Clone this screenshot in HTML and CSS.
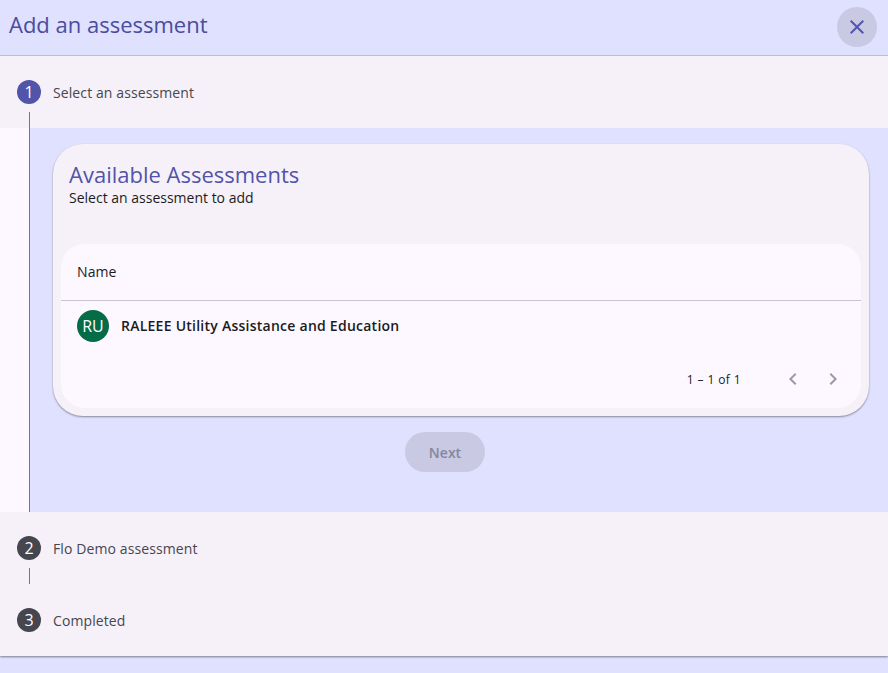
FILE: index.html
```html
<!DOCTYPE html>
<html lang="en">
<head>
  <meta charset="UTF-8" />
  <title>Add an assessment</title>
  <link rel="stylesheet" href="styles.css">
</head>
<body>
  <header class="top-bar">
    <h1>Add an assessment</h1>
    <button class="close-btn" aria-label="Close">
      <svg width="24" height="24" viewBox="0 0 24 24"><path d="M19 6.41 17.59 5 12 10.59 6.41 5 5 6.41 10.59 12 5 17.59 6.41 19 12 13.41 17.59 19 19 17.59 13.41 12z"/></svg>
    </button>
  </header>

  <main class="stepper">
    <!-- Step 1 -->
    <div class="step-head">
      <span class="step-num active">1</span>
      <span class="step-label">Select an assessment</span>
    </div>
    <div class="step-body">
      <div class="step-rail"><span class="rail-line"></span></div>
      <div class="step-content">
        <section class="card">
          <div class="card-head">
            <h2>Available Assessments</h2>
            <p>Select an assessment to add</p>
          </div>
          <div class="table">
            <div class="table-head">Name</div>
            <div class="table-row">
              <span class="avatar">RU</span>
              <span class="row-name">RALEEE Utility Assistance and Education</span>
            </div>
            <div class="paginator">
              <span class="range">1 – 1 of 1</span>
              <button class="page-btn" aria-label="Previous">
                <svg width="24" height="24" viewBox="0 0 24 24"><path d="M15.41 7.41 14 6l-6 6 6 6 1.41-1.41L10.83 12z"/></svg>
              </button>
              <button class="page-btn" aria-label="Next page">
                <svg width="24" height="24" viewBox="0 0 24 24"><path d="M10 6 8.59 7.41 13.17 12l-4.58 4.59L10 18l6-6z"/></svg>
              </button>
            </div>
          </div>
        </section>
        <div class="actions">
          <button class="next-btn" disabled>Next</button>
        </div>
      </div>
    </div>

    <!-- Step 2 -->
    <div class="step-head">
      <span class="step-num">2</span>
      <span class="step-label">Flo Demo assessment</span>
    </div>
    <div class="step-gap"><span class="rail-line"></span></div>

    <!-- Step 3 -->
    <div class="step-head">
      <span class="step-num">3</span>
      <span class="step-label">Completed</span>
    </div>
  </main>
</body>
</html>
```

FILE: styles.css
```css
* { box-sizing: border-box; }
html, body { height: 100%; }
body {
  margin: 0;
  overflow: hidden;
  font-family: "Open Sans", "Noto Sans", sans-serif;
  background: #e0e0ff;
  color: #1b1b1f;
}

button {
  font-family: inherit;
  border: none;
  padding: 0;
}

/* Top bar */
.top-bar {
  height: 56px;
  display: flex;
  align-items: center;
  justify-content: space-between;
  padding: 0 11px 8px 9px;
  border-bottom: 1px solid #c7c5d0;
}

.top-bar h1 {
  margin: 0;
  font-size: 22px;
  font-weight: 400;
  color: #4a4c9c;
}

.close-btn {
  width: 40px;
  height: 40px;
  margin-top: 6px;
  border-radius: 50%;
  background: #c9c9e4;
  display: flex;
  align-items: center;
  justify-content: center;
}

.close-btn svg { fill: #5356ad; }

/* Stepper */
.stepper {
  height: 600px;
  background: #f6f1f8;
  box-shadow: 0 1px 2px rgba(0,0,0,0.45);
}

.step-head {
  height: 72px;
  display: flex;
  align-items: center;
  gap: 12px;
  padding-left: 17px;
}

.step-num {
  width: 24px;
  height: 24px;
  border-radius: 50%;
  background: #46464f;
  color: #fff;
  font-size: 16px;
  display: flex;
  align-items: center;
  justify-content: center;
}

.step-num.active { background: #5154a8; }

.step-label {
  font-size: 14px;
  letter-spacing: 0.1px;
  color: #46464f;
}

.step-body {
  display: flex;
  height: 384px;
}

.step-rail {
  width: 30px;
  background: #fdf8ff;
  display: flex;
  justify-content: flex-end;
}

.rail-line {
  display: block;
  width: 1px;
  background: #777680;
}

.step-rail .rail-line { margin-top: -16px; }

.step-gap {
  height: 0;
  padding-left: 29px;
}

.step-gap .rail-line {
  height: 16px;
  position: relative;
  top: -16px;
}

.step-content {
  flex: 1;
  background: #e0e0ff;
  padding: 16px 19px 0 23px;
}

/* Card */
.card {
  height: 272px;
  background: #f6f1f8;
  border-radius: 30px;
  box-shadow: 0 1px 2px rgba(0,0,0,0.4);
  padding: 8px;
}

.card-head {
  height: 92px;
  padding: 7px 8px 0;
}

.card-head h2 {
  margin: 0;
  font-size: 22px;
  line-height: 30px;
  font-weight: 400;
  color: #5154a8;
}

.card-head p {
  margin: 0;
  font-size: 14px;
  line-height: 18px;
  color: #1b1b1f;
}

.table {
  height: 164px;
  background: #fdf8ff;
  border-radius: 24px;
}

.table-head {
  height: 57px;
  padding: 0 16px 2px;
  display: flex;
  align-items: center;
  border-bottom: 1px solid #c7c5d0;
  font-size: 14px;
  letter-spacing: 0.1px;
}

.table-row {
  height: 50px;
  padding: 0 16px 2px;
  display: flex;
  align-items: center;
  gap: 12px;
}

.avatar {
  width: 32px;
  height: 32px;
  margin-top: 2px;
  border-radius: 50%;
  background: #056c48;
  color: #fff;
  font-size: 16px;
  display: flex;
  align-items: center;
  justify-content: center;
}

.row-name {
  font-size: 14px;
  font-weight: 600;
  letter-spacing: 0.25px;
}

.paginator {
  display: flex;
  justify-content: flex-end;
  align-items: center;
  height: 44px;
  margin-top: 6px;
  padding-right: 8px;
  font-size: 12px;
}

.range {
  margin-right: 32px;
  letter-spacing: 0.4px;
}

.page-btn {
  width: 40px;
  height: 40px;
  background: none;
  display: flex;
  align-items: center;
  justify-content: center;
}

.page-btn svg { fill: #9b9aa2; }

/* Next button */
.actions {
  display: flex;
  justify-content: center;
  padding: 16px 32px 0 0;
}

.next-btn {
  width: 80px;
  height: 40px;
  border-radius: 20px;
  background: #c9c9e4;
  color: #86869a;
  font-size: 14px;
  font-weight: 600;
}
```
